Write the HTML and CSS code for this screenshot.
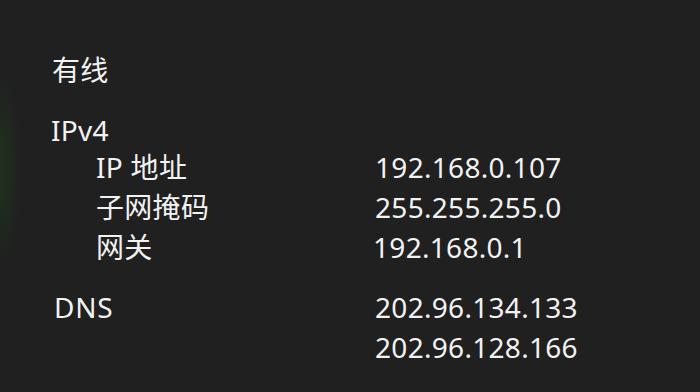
FILE: index.html
```html
<!DOCTYPE html>
<html lang="zh-CN">
<head>
<meta charset="utf-8">
<title>有线</title>
<link rel="stylesheet" href="styles.css">
</head>
<body>
<main class="panel">
  <h2 class="title">有线</h2>
  <section class="group">
    <div class="group-head">IPv4</div>
    <dl class="props">
      <dt class="label sub">IP 地址</dt><dd class="value">192.168.0.107</dd>
      <dt class="label sub">子网掩码</dt><dd class="value">255.255.255.0</dd>
      <dt class="label sub">网关</dt><dd class="value shift">192.168.0.1</dd>
    </dl>
  </section>
  <section class="group dns">
    <dl class="props">
      <dt class="label dns-label">DNS</dt><dd class="value">202.96.134.133</dd>
      <dt class="label"></dt><dd class="value">202.96.128.166</dd>
    </dl>
  </section>
</main>
</body>
</html>
```
FILE: styles.css
```css
html, body {
  margin: 0;
  padding: 0;
}
body {
  width: 700px;
  height: 392px;
  overflow: hidden;
  background-color: #202020;
  background-image: radial-gradient(ellipse 22px 95px at 0 168px, rgba(30, 90, 24, 0.32), rgba(30, 90, 24, 0) 100%);
  color: #f2f2f2;
  font-family: "Noto Sans", "Noto Sans CJK SC", sans-serif;
  font-size: 28px;
  letter-spacing: 0.3px;
}
.panel {
  padding: 50px 0 0 51px;
}
.title {
  margin: 0;
  height: 40px;
  line-height: 40px;
  font-size: 28px;
  font-weight: 400;
  padding-left: 1px;
}
.group {
  margin-top: 20px;
}
.group-head {
  height: 37px;
  line-height: 40px;
}
.props {
  margin: 0;
  display: grid;
  grid-template-columns: 324px 1fr;
  grid-auto-rows: 40px;
}
.label, .value {
  margin: 0;
  line-height: 40px;
  white-space: nowrap;
}
.label.sub {
  padding-left: 45px;
}
.dns-label {
  padding-left: 3px;
  letter-spacing: 0.8px;
}
.value.shift {
  margin-left: -2px;
}
.dns {
  margin-top: 20px;
}
```
